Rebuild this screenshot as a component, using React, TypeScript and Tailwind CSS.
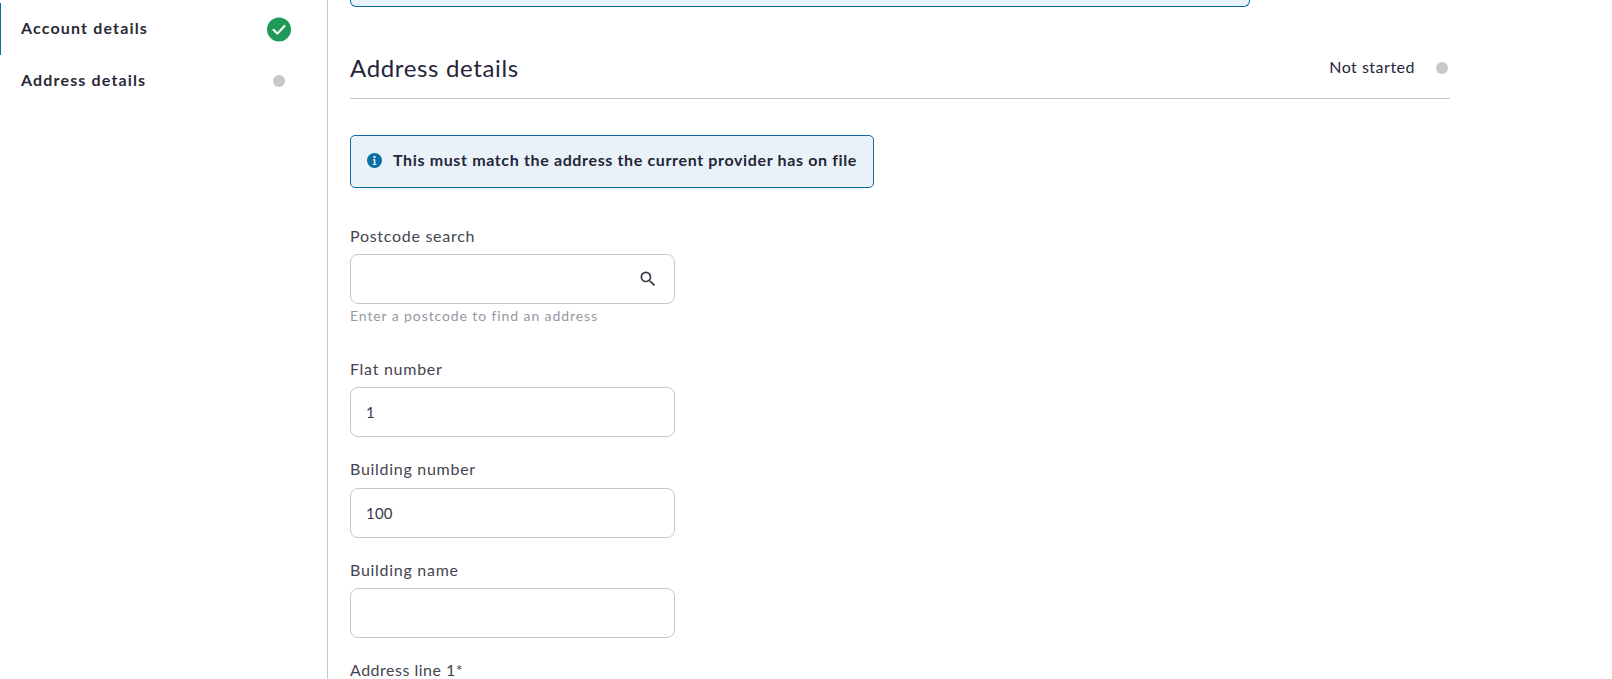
import React from 'react';

const Field = ({ label, value, className, gap }: { label: string; value?: string; className: string; gap: string }) => (
  <div className={className}>
    <div className="h-[20px] text-[16px] leading-[20px] tracking-[0.72px] text-[#45444f]">{label}</div>
    <div className={`${gap} flex h-[50px] w-[325px] items-center rounded-[8px] border border-[#c6c6c8] pl-[15px] text-[15px] tracking-[0.2px] text-[#3b3a46]`}>
      {value}
    </div>
  </div>
);

const SideItem = ({ label, active, children }: { label: string; active?: boolean; children: React.ReactNode }) => (
  <div className={`flex h-[52px] items-center border-l pl-[20px] ${active ? 'border-[#0a6ea6]' : 'border-transparent'}`}>
    <span className="w-[246px] pb-[2px] text-[16px] font-bold tracking-[1.15px] text-[#2b2a38]">{label}</span>
    <span className="flex w-[24px] justify-center">{children}</span>
  </div>
);

export default function App() {
  return (
    <div className="flex h-[679px] w-[1612px] overflow-hidden bg-white font-['Lato',sans-serif]">
      <aside className="h-full w-[328px] shrink-0 border-r border-[#c6c6c8] pt-[3px]">
        <SideItem label="Account details" active>
          <svg width="25" height="25" viewBox="0 0 25 25">
            <circle cx="12.5" cy="12.5" r="12.5" fill="#1f9a56" />
            <path d="M6.8 12.8l4 4 7.4-8" fill="none" stroke="#fff" strokeWidth="2.2" strokeLinecap="round" strokeLinejoin="round" />
          </svg>
        </SideItem>
        <SideItem label="Address details">
          <span className="h-[12px] w-[12px] rounded-full bg-[#c8c7cc]" />
        </SideItem>
      </aside>

      <main className="flex-1 pl-[22px]">
        <div className="h-[7px] w-[900px] rounded-b-[6px] border border-t-0 border-[#0a6ea6] bg-[#e9f2f8]" />

        <div className="mt-[43px] flex h-[49px] w-[1100px] items-start justify-between border-b border-[#c6c6c8] pr-[2px]">
          <h2 className="text-[24px] leading-[36px] tracking-[0.65px] text-[#26253a]">Address details</h2>
          <div className="mt-[7px] flex items-center">
            <span className="mb-[2px] text-[16px] leading-[20px] tracking-[0.5px] text-[#26253a]">Not started</span>
            <span className="ml-[21px] h-[12px] w-[12px] rounded-full bg-[#c8c7cc]" />
          </div>
        </div>

        <div className="mt-[36px] flex h-[53px] w-[524px] items-center rounded-[5px] border border-[#0a6ea6] bg-[#e9f2f8] pb-[3px] pl-[16px]">
          <svg width="15" height="15" viewBox="0 0 15 15" className="mt-[1px] shrink-0">
            <circle cx="7.5" cy="7.5" r="7.5" fill="#0a6ea6" />
            <circle cx="7.5" cy="4" r="1.2" fill="#e9f2f8" />
            <path d="M6 6.3h2.4v4.6h1v1.2H5.8v-1.2h1V7.5H6z" fill="#e9f2f8" />
          </svg>
          <span className="ml-[11px] text-[16px] font-bold tracking-[0.64px] text-[#26253a]">
            This must match the address the current provider has on file
          </span>
        </div>

        <div className="mt-[38px] w-[325px]">
          <div className="h-[20px] text-[16px] leading-[20px] tracking-[0.72px] text-[#45444f]">Postcode search</div>
          <div className="mt-[8px] flex h-[50px] items-center justify-end rounded-[8px] border border-[#c6c6c8] pr-[16px]">
            <svg width="20" height="20" viewBox="0 0 24 24" fill="#3b3a46">
              <path d="M15.5 14h-.79l-.28-.27A6.47 6.47 0 0 0 16 9.5 6.5 6.5 0 1 0 9.5 16c1.61 0 3.09-.59 4.23-1.57l.27.28v.79l5 4.99L20.49 19l-4.99-5zm-6 0C7.01 14 5 11.99 5 9.5S7.01 5 9.5 5 14 7.01 14 9.5 11.99 14 9.5 14z" />
            </svg>
          </div>
          <div className="mt-[3px] h-[18px] text-[14px] leading-[18px] tracking-[0.9px] text-[#98979f]">
            Enter a postcode to find an address
          </div>
        </div>

        <Field label="Flat number" value="1" className="mt-[34px]" gap="mt-[8px]" />
        <Field label="Building number" value="100" className="mt-[22px]" gap="mt-[9px]" />
        <Field label="Building name" className="mt-[22px]" gap="mt-[8px]" />
        <div className="mt-[22px] h-[20px] text-[16px] leading-[20px] tracking-[0.5px] text-[#45444f]">Address line 1*</div>
      </main>
    </div>
  );
}
